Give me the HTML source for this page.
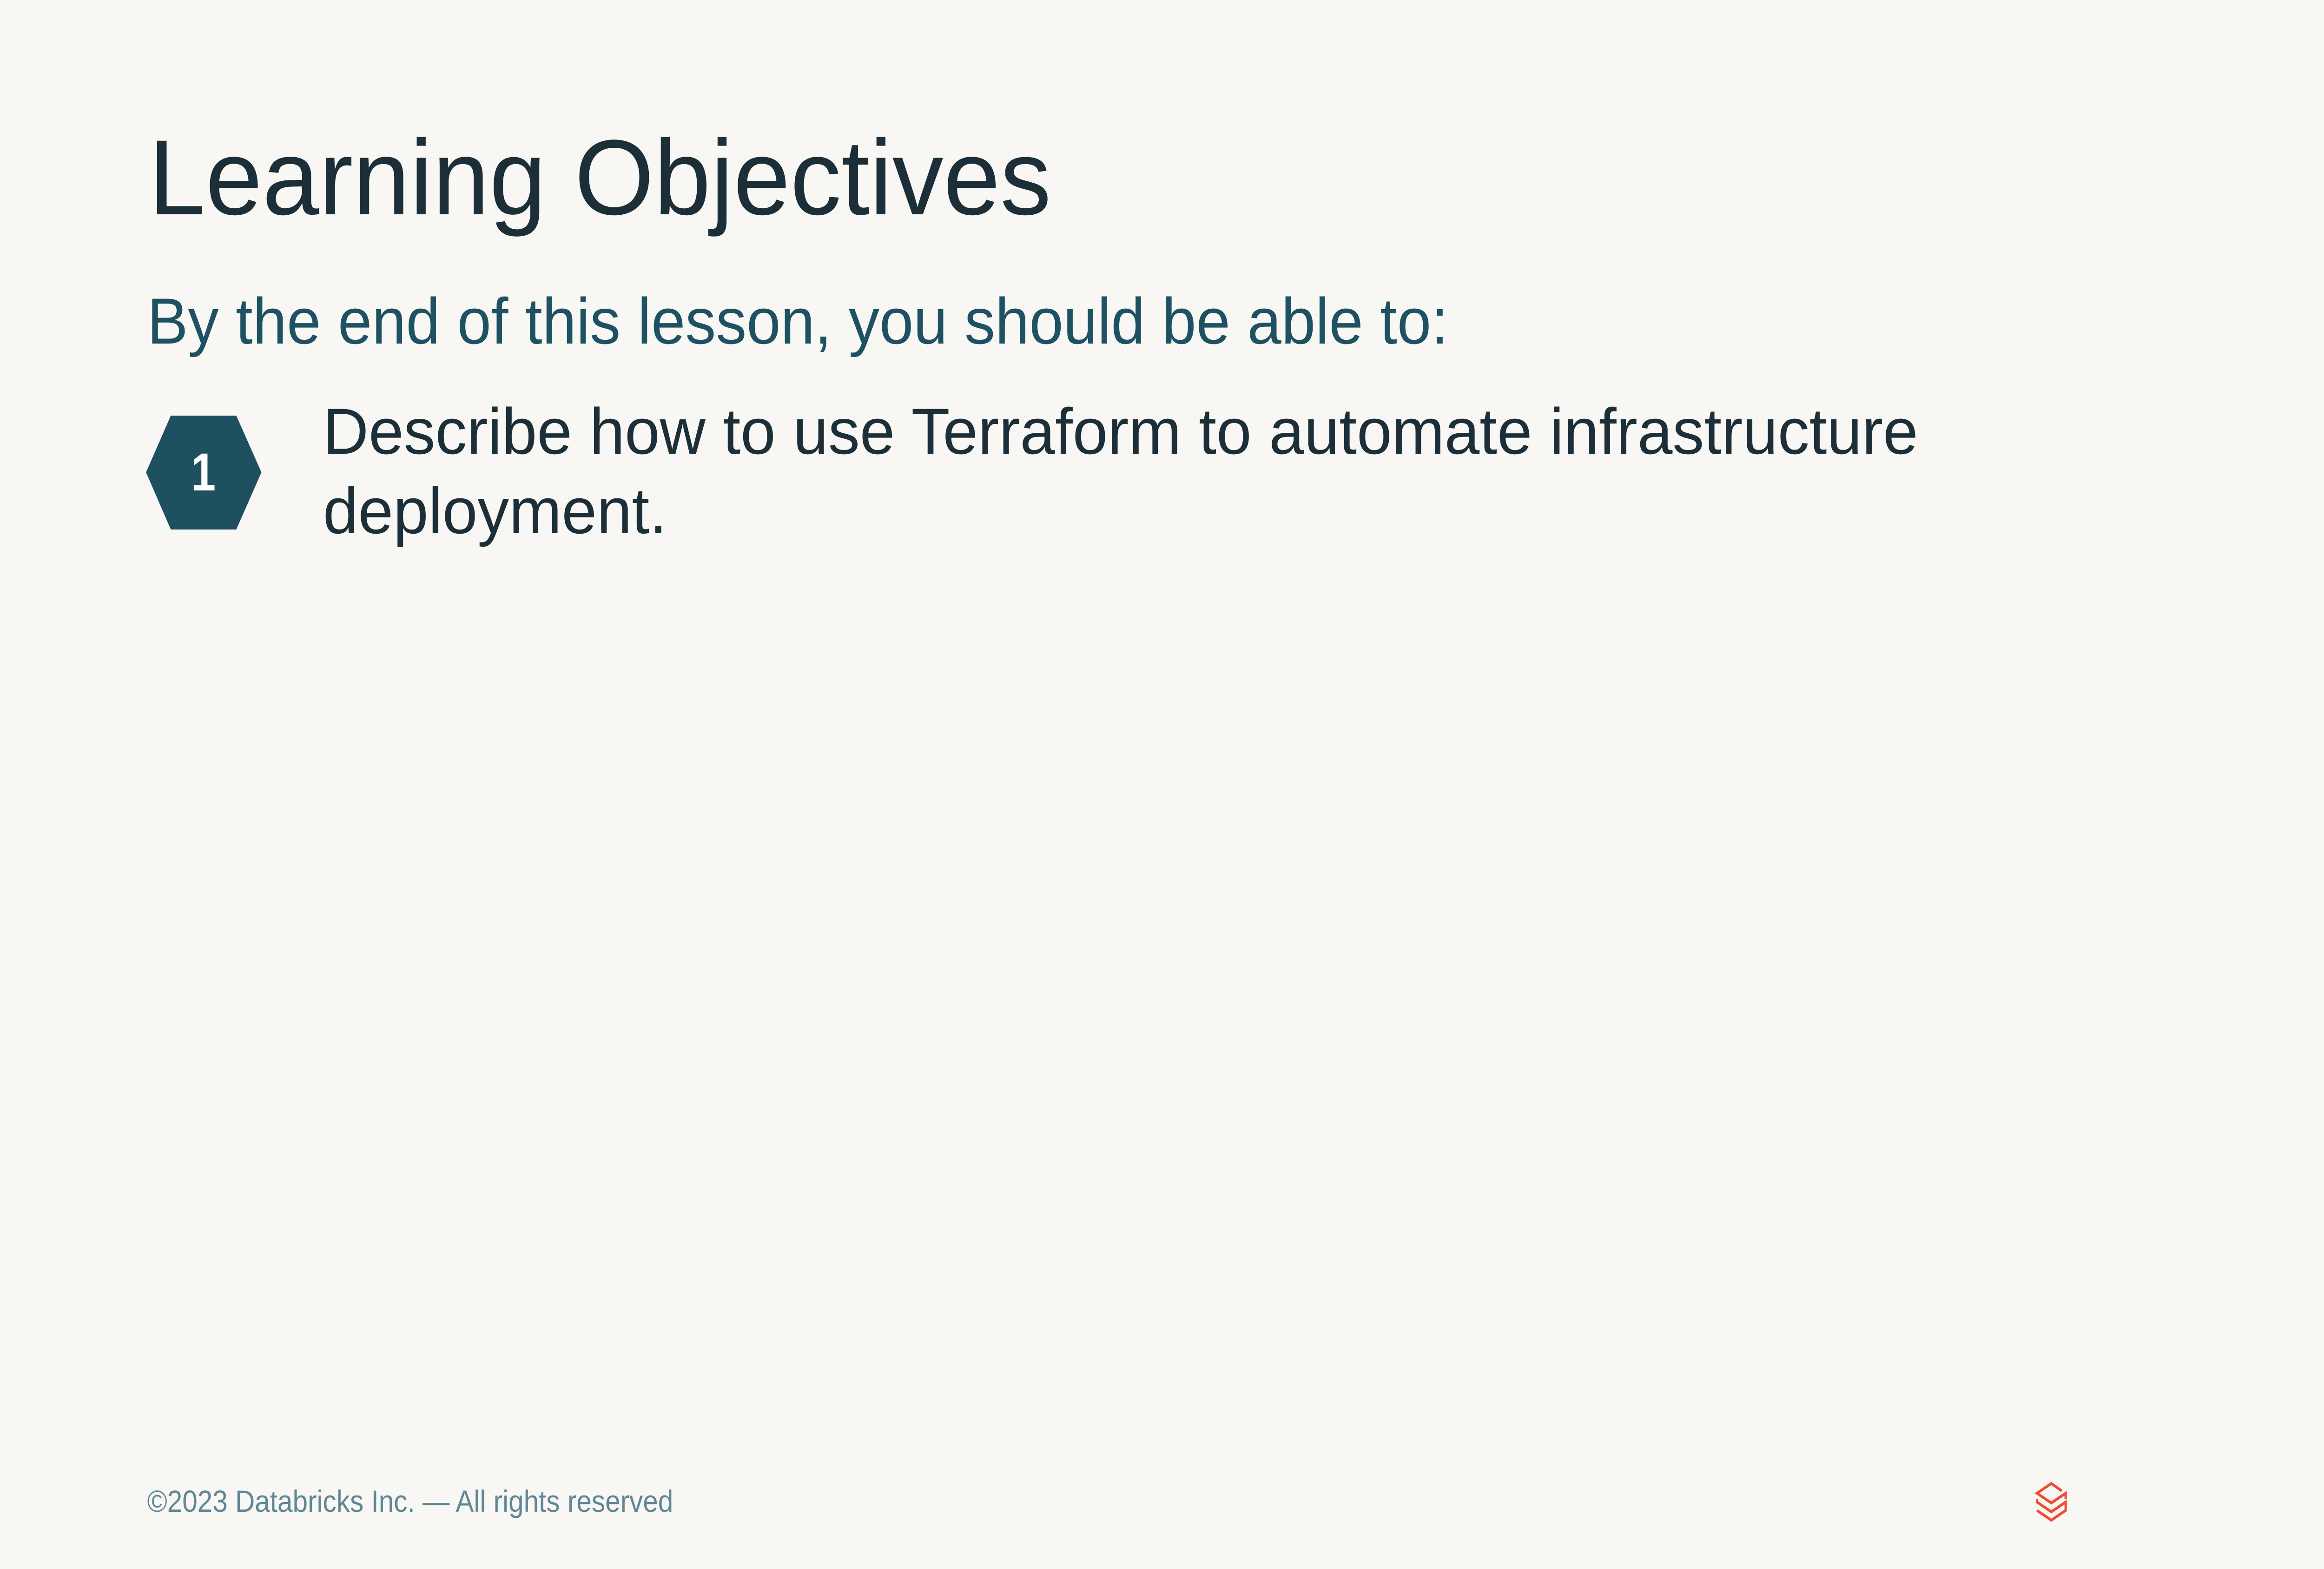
<!DOCTYPE html>
<html><head><meta charset="utf-8"><style>
html,body{margin:0;padding:0;width:100%;height:100%;overflow:hidden;background:#f8f7f4}
svg{display:block;position:fixed;left:0;top:0;width:100vw;height:100vh}
text{font-family:"Liberation Sans",sans-serif}
</style></head><body>
<svg viewBox="0 0 6000 3375" preserveAspectRatio="none">
<rect width="6000" height="3375" fill="#f8f7f4"/>
<text x="384" y="461" font-size="230" fill="#1c2f38" textLength="2330" lengthAdjust="spacingAndGlyphs">Learning Objectives</text>
<text x="380" y="739" font-size="140" fill="#1e5262" textLength="3359" lengthAdjust="spacingAndGlyphs">By the end of this lesson, you should be able to:</text>
<polygon points="377,1016 441,894 610,894 675,1016 610,1139 441,1139" fill="#1e5060"/>
<text x="525" y="1055" font-size="115" font-weight="bold" fill="#fff" text-anchor="middle">1</text>
<text x="834" y="976" font-size="140" fill="#1c2f38" textLength="4118" lengthAdjust="spacingAndGlyphs">Describe how to use Terraform to automate infrastructure</text>
<text x="834" y="1147" font-size="140" fill="#1c2f38" textLength="888" lengthAdjust="spacingAndGlyphs">deployment.</text>
<text x="380" y="3252" font-size="66" fill="#5f8796" textLength="1358" lengthAdjust="spacingAndGlyphs">©2023 Databricks Inc. — All rights reserved</text>
<g fill="none" stroke="#ef4b33" stroke-width="6">
<path d="M5323,3207 L5296,3191 L5259,3212 L5296,3233 L5333,3212 L5333,3224"/>
<path d="M5259,3225 L5259,3231 L5296,3252 L5333,3231 L5333,3238"/>
<path d="M5259,3249 L5296,3270 L5333,3249 L5333,3238"/>
</g>
</svg>
</body></html>
